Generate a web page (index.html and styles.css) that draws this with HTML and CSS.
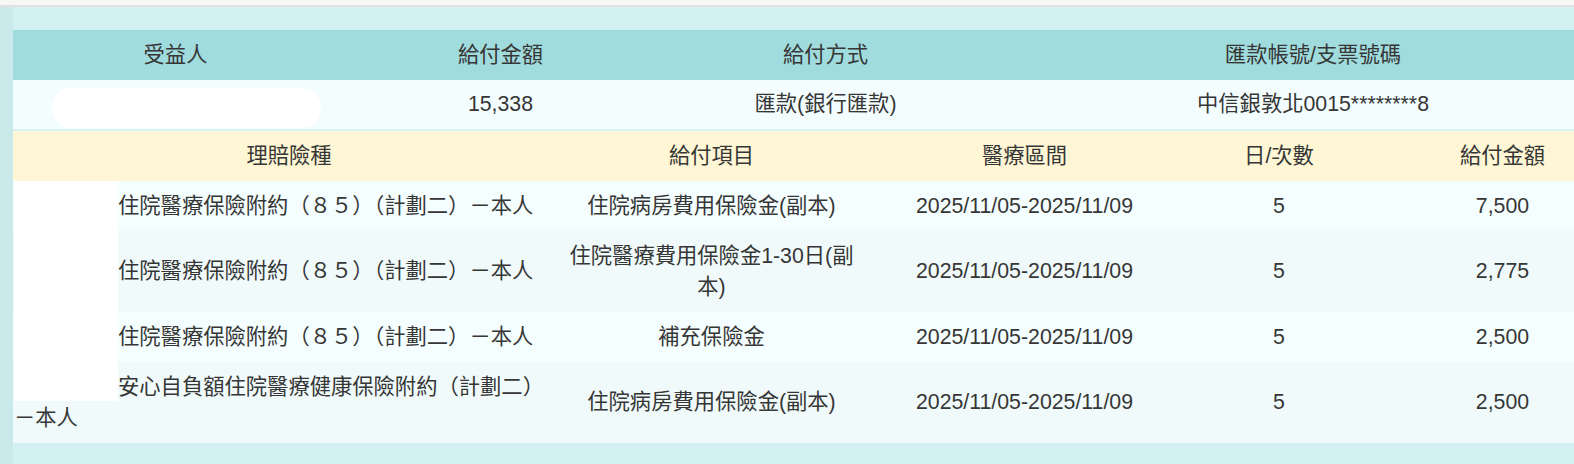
FILE: index.html
```html
<!DOCTYPE html>
<html lang="zh-Hant">
<head>
<meta charset="utf-8">
<title>理賠給付明細</title>
<link rel="stylesheet" href="styles.css">
</head>
<body>
<div class="topbar"></div>
<div class="page">
  <div class="side"></div>
  <div class="content">
    <div class="tables">
      <table class="payee">
        <colgroup><col class="c325"><col class="c325"><col class="c325"><col class="c650"></colgroup>
        <thead>
          <tr><th>受益人</th><th>給付金額</th><th>給付方式</th><th>匯款帳號/支票號碼</th></tr>
        </thead>
        <tbody>
          <tr><td></td><td>15,338</td><td>匯款(銀行匯款)</td><td>中信銀敦北0015********8</td></tr>
        </tbody>
      </table>
      <table class="detail">
        <colgroup><col class="d1"><col class="d2"><col class="d3"><col class="d4"><col class="d5"></colgroup>
        <thead>
          <tr><th>理賠險種</th><th>給付項目</th><th>醫療區間</th><th>日/次數</th><th>給付金額</th></tr>
        </thead>
        <tbody>
          <tr class="odd"><td class="plan">住院醫療保險附約（８５）（計劃二）－本人</td><td>住院病房費用保險金(副本)</td><td>2025/11/05-2025/11/09</td><td>5</td><td>7,500</td></tr>
          <tr class="even"><td class="plan">住院醫療保險附約（８５）（計劃二）－本人</td><td>住院醫療費用保險金1-30日(副本)</td><td>2025/11/05-2025/11/09</td><td>5</td><td>2,775</td></tr>
          <tr class="odd"><td class="plan">住院醫療保險附約（８５）（計劃二）－本人</td><td>補充保險金</td><td>2025/11/05-2025/11/09</td><td>5</td><td>2,500</td></tr>
          <tr class="even"><td class="plan">安心自負額住院醫療健康保險附約（計劃二）－本人</td><td>住院病房費用保險金(副本)</td><td>2025/11/05-2025/11/09</td><td>5</td><td>2,500</td></tr>
        </tbody>
      </table>
      <div class="mask-pill"></div>
      <div class="mask-rect"></div>
    </div>
  </div>
</div>
</body>
</html>
```

FILE: styles.css
```css
html, body {
  margin: 0;
  padding: 0;
}
body {
  width: 1574px;
  height: 464px;
  overflow: hidden;
  background: #d3f0f2;
  font-family: "Liberation Sans", "Noto Sans CJK TC", sans-serif;
  font-size: 21.3px;
  color: #363636;
}
.topbar {
  height: 5px;
  background: #f7f7f7;
  border-bottom: 2px solid #e1e1e1;
}
.page {
  display: flex;
  height: 457px;
}
.side {
  flex: 0 0 13px;
  background: #c9e9eb;
}
.content {
  flex: 1;
  padding-top: 23px;
  overflow: hidden;
}
.tables {
  position: relative;
  width: 1625px;
}
table {
  width: 1625px;
  table-layout: fixed;
  border-collapse: collapse;
}
th, td {
  padding: 9.5px 1px;
  line-height: 31px;
  text-align: center;
  font-weight: normal;
  vertical-align: middle;
}
.c325 { width: 325px; }
.c650 { width: 650px; }
.payee thead th {
  background: #a0dcdd;
}
.payee tbody td {
  background: #f4fdfe;
  padding: 9px 1px;
  border-bottom: 2px solid #d8f3f5;
}
.d1 { width: 552px; }
.d2 { width: 293px; }
.d3 { width: 333px; }
.d4 { width: 176px; }
.d5 { width: 271px; }
.detail thead th {
  background: #fef6d4;
}
.detail tr.odd td { background: #f5fefe; }
.detail tr.even td { background: #f0fafa; }
.detail td.plan {
  text-align: left;
  padding-left: 1px;
  padding-right: 15px;
  text-indent: 104px;
}
.mask-pill {
  position: absolute;
  left: 39px;
  top: 58px;
  width: 269px;
  height: 40px;
  border-radius: 20px;
  background: #ffffff;
}
.mask-rect {
  position: absolute;
  left: 1px;
  top: 151px;
  width: 104px;
  height: 220px;
  background: #ffffff;
}
```
